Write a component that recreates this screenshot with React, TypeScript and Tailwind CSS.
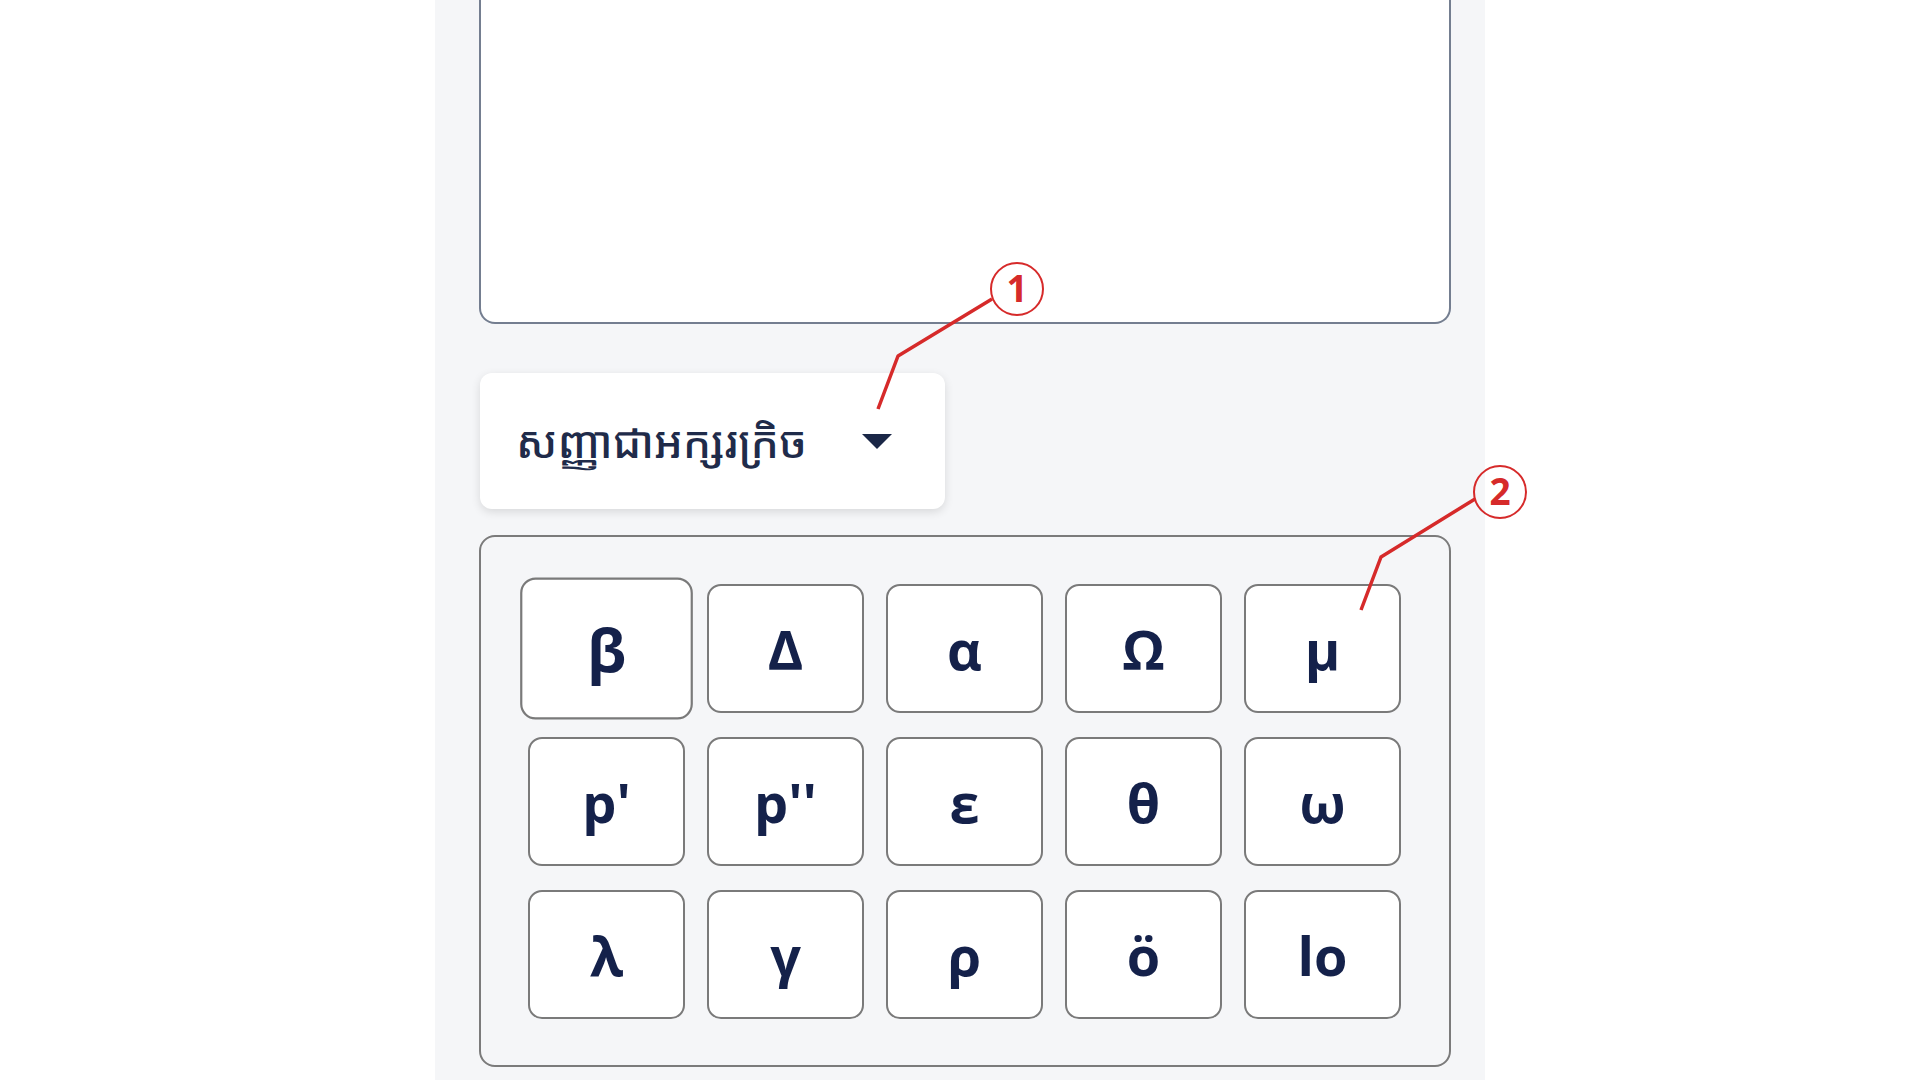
import React from "react";

const keys: string[] = ["β", "Δ", "α", "Ω", "μ", "p'", "p''", "ε", "θ", "ω", "λ", "γ", "ρ", "ö", "lo"];

const Callouts = () => (
  <svg
    className="absolute left-0 top-0 pointer-events-none"
    width="1920"
    height="1080"
    viewBox="0 0 1920 1080"
  >
    <g fill="none" stroke="#d62a2a" strokeWidth="3.5" strokeLinejoin="round">
      <polyline points="992,299 898,356 878,409" />
      <polyline points="1475,499 1381,557 1361,610" />
    </g>
    <g fill="none" stroke="#d62a2a" strokeWidth="2">
      <circle cx="1017" cy="289" r="26" />
      <circle cx="1500" cy="492" r="26" />
    </g>
    <g
      fill="#d62a2a"
      fontFamily="'Open Sans', 'Noto Sans', sans-serif"
      fontWeight="700"
      fontSize="37"
      textAnchor="middle"
    >
      <text x="1017" y="302">1</text>
      <text x="1500" y="505">2</text>
    </g>
  </svg>
);

export default function App() {
  return (
    <div className="relative w-full h-[1080px] bg-white overflow-hidden">
      <div className="ml-[435px] w-[1050px] h-full bg-[#f5f6f8] pl-[44px] pr-[34px]">
        <div className="h-[324px] w-full bg-white border-x-2 border-b-2 border-[#747e90] rounded-b-2xl" />

        <div className="mt-[49px] ml-px w-[465px] h-[136px] bg-white rounded-xl shadow-[0_3px_10px_rgba(0,0,0,0.12)] flex items-center pl-[36px]">
          <span
            className="text-[#1f2b4a] text-[44px] leading-none font-medium"
            style={{ fontFamily: "'Noto Sans Khmer', 'Khmer OS', 'Noto Sans', sans-serif" }}
          >
            សញ្ញាជាអក្សរក្រិច
          </span>
          <svg className="ml-auto mr-[53px]" width="30" height="16" viewBox="0 0 30 16">
            <polygon points="0,1 30,1 15,16" fill="#1a2747" />
          </svg>
        </div>

        <div className="mt-[26px] h-[532px] border-2 border-[#7b7b7b] rounded-2xl pl-[47px] pt-[47px]">
          <div className="grid grid-cols-[repeat(5,157px)] grid-rows-[repeat(3,129px)] gap-x-[22px] gap-y-[24px]">
            {keys.map((k, idx) => (
              <button
                key={idx}
                className={
                  "w-full h-full bg-white border-2 border-[#7a7a7a] rounded-[14px] flex items-center justify-center text-[#14214a] text-[54px] font-bold leading-none font-['Open_Sans',sans-serif]" +
                  (idx === 0 ? " scale-110" : "")
                }
              >
                {k}
              </button>
            ))}
          </div>
        </div>
      </div>
      <Callouts />
    </div>
  );
}
